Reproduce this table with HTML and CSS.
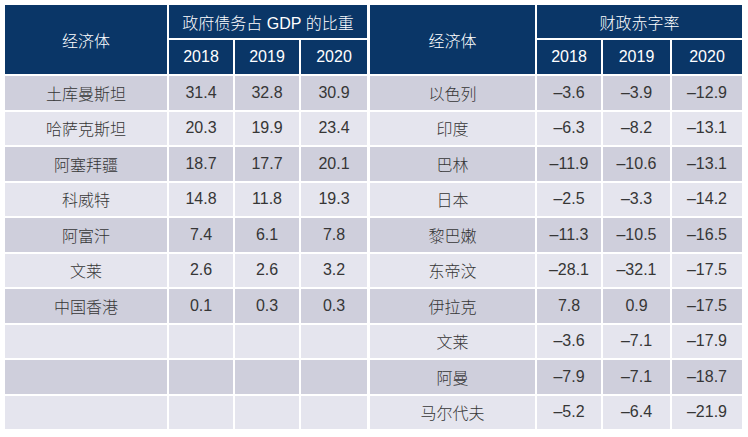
FILE: index.html
```html
<!DOCTYPE html>
<html lang="zh">
<head>
<meta charset="utf-8">
<link rel="stylesheet" href="styles.css">
</head>
<body>
<div class="page">
  <div class="tbl tbl-left">
    <div class="h span2">经济体</div>
    <div class="h span3">政府债务占 GDP 的比重</div>
    <div class="h">2018</div><div class="h">2019</div><div class="h">2020</div>

    <div class="c d">土库曼斯坦</div><div class="c d">31.4</div><div class="c d">32.8</div><div class="c d">30.9</div>
    <div class="c l">哈萨克斯坦</div><div class="c l">20.3</div><div class="c l">19.9</div><div class="c l">23.4</div>
    <div class="c d">阿塞拜疆</div><div class="c d">18.7</div><div class="c d">17.7</div><div class="c d">20.1</div>
    <div class="c l">科威特</div><div class="c l">14.8</div><div class="c l">11.8</div><div class="c l">19.3</div>
    <div class="c d">阿富汗</div><div class="c d">7.4</div><div class="c d">6.1</div><div class="c d">7.8</div>
    <div class="c l">文莱</div><div class="c l">2.6</div><div class="c l">2.6</div><div class="c l">3.2</div>
    <div class="c d">中国香港</div><div class="c d">0.1</div><div class="c d">0.3</div><div class="c d">0.3</div>
    <div class="c l"></div><div class="c l"></div><div class="c l"></div><div class="c l"></div>
    <div class="c d"></div><div class="c d"></div><div class="c d"></div><div class="c d"></div>
    <div class="c l"></div><div class="c l"></div><div class="c l"></div><div class="c l"></div>
  </div>
  <div class="tbl tbl-right">
    <div class="h span2">经济体</div>
    <div class="h span3">财政赤字率</div>
    <div class="h">2018</div><div class="h">2019</div><div class="h">2020</div>

    <div class="c d">以色列</div><div class="c d">–3.6</div><div class="c d">–3.9</div><div class="c d">–12.9</div>
    <div class="c l">印度</div><div class="c l">–6.3</div><div class="c l">–8.2</div><div class="c l">–13.1</div>
    <div class="c d">巴林</div><div class="c d">–11.9</div><div class="c d">–10.6</div><div class="c d">–13.1</div>
    <div class="c l">日本</div><div class="c l">–2.5</div><div class="c l">–3.3</div><div class="c l">–14.2</div>
    <div class="c d">黎巴嫩</div><div class="c d">–11.3</div><div class="c d">–10.5</div><div class="c d">–16.5</div>
    <div class="c l">东帝汶</div><div class="c l">–28.1</div><div class="c l">–32.1</div><div class="c l">–17.5</div>
    <div class="c d">伊拉克</div><div class="c d">7.8</div><div class="c d">0.9</div><div class="c d">–17.5</div>
    <div class="c l">文莱</div><div class="c l">–3.6</div><div class="c l">–7.1</div><div class="c l">–17.9</div>
    <div class="c d">阿曼</div><div class="c d">–7.9</div><div class="c d">–7.1</div><div class="c d">–18.7</div>
    <div class="c l">马尔代夫</div><div class="c l">–5.2</div><div class="c l">–6.4</div><div class="c l">–21.9</div>
  </div>
</div>
</body>
</html>
```
FILE: styles.css
```css
html, body {
  margin: 0;
  padding: 0;
  background: #ffffff;
}
.page {
  display: flex;
  gap: 3px;
  padding: 5px 0 0 5px;
  font-family: "Liberation Sans", "Noto Sans CJK SC", sans-serif;
  font-size: 16px;
  font-weight: 300;
  color: #363636;
}
.tbl {
  display: grid;
  gap: 2px;
  grid-template-rows: 33px 34px repeat(10, 33.5px);
}
.tbl-left {
  grid-template-columns: 162px 64px 64px 66px;
}
.tbl-right {
  grid-template-columns: 165px 64px 67px 70px;
}
.h, .c {
  display: flex;
  align-items: center;
  justify-content: center;
  white-space: nowrap;
}
.h {
  background: #0a3667;
  color: #ffffff;
}
.span2 {
  grid-row: span 2;
}
.span3 {
  grid-column: span 3;
}
.d {
  background: #cfcfdc;
}
.l {
  background: #e5e5ee;
}
```
